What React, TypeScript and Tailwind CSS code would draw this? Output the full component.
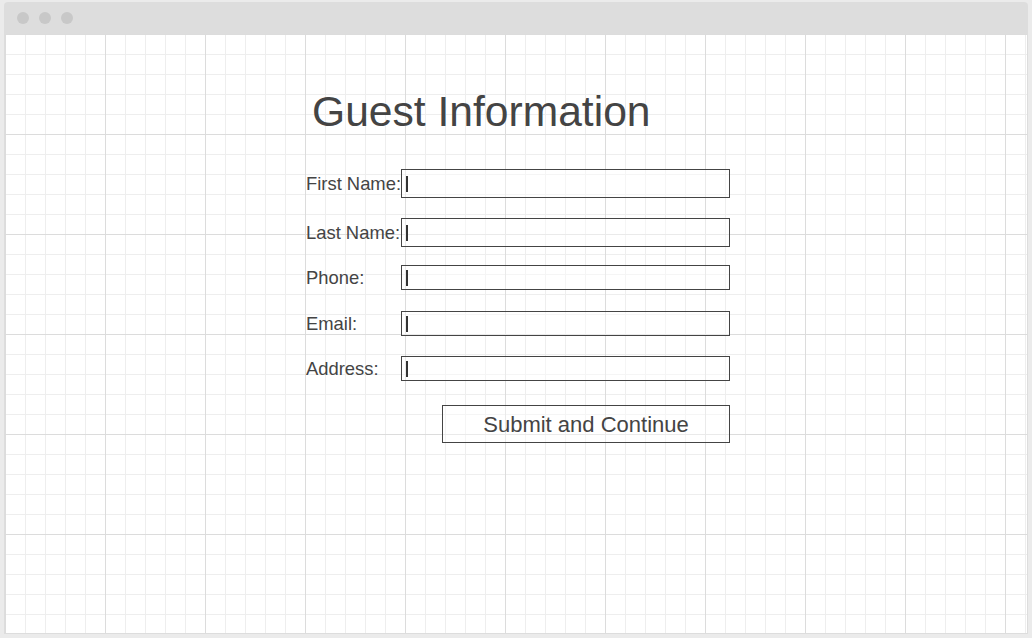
import React from 'react';

const fields = [
    { label: 'First Name:', h: 'h-[29px]', mt: 'mt-0' },
    { label: 'Last Name:', h: 'h-[29px]', mt: 'mt-[20px]' },
    { label: 'Phone:', h: 'h-[25px]', mt: 'mt-[18px]' },
    { label: 'Email:', h: 'h-[25px]', mt: 'mt-[21px]' },
    { label: 'Address:', h: 'h-[25px]', mt: 'mt-[20px]' },
];

function Field({ label, h, mt }: { label: string; h: string; mt: string }) {
    return (
        <div className={`flex items-center ${mt}`}>
            <label className="w-[95px] pt-[1px] text-[18.4px] leading-none text-[#444444] whitespace-nowrap">{label}</label>
            <div className={`w-[329px] ${h} border border-[#444444] bg-white/40 flex items-center pl-[4px]`}>
                <span className="block w-[2px] h-[16px] bg-[#333333]" />
            </div>
        </div>
    );
}

export default function App() {
    return (
        <div className="w-[1032px] h-[638px] bg-[#ebebeb] pt-[2px] pl-[4px] font-['Liberation_Sans',Arial,sans-serif]">
            <div className="w-[1024px] h-[632px] bg-[#dddddd] rounded-t-[4px] px-[1px] pb-[1px] flex flex-col">
                {/* Title bar */}
                <div className="h-[32px] flex items-center gap-[10px] pl-[12px]">
                    <span className="w-[12px] h-[12px] rounded-full bg-[#c8c8c8]" />
                    <span className="w-[12px] h-[12px] rounded-full bg-[#c8c8c8]" />
                    <span className="w-[12px] h-[12px] rounded-full bg-[#c8c8c8]" />
                </div>

                {/* Canvas */}
                <div className="flex-1 bg-white bg-[linear-gradient(to_right,#dcdcdc_1px,transparent_1px),linear-gradient(to_bottom,#dcdcdc_1px,transparent_1px),linear-gradient(to_right,#eeeeee_1px,transparent_1px),linear-gradient(to_bottom,#eeeeee_1px,transparent_1px)] bg-[size:100px_100px,100px_100px,20px_20px,20px_20px]">
                    <div className="pl-[301px] pt-[53px]">
                        <h1 className="ml-[6px] text-[42.6px] leading-[48px] text-[#444444] font-normal">Guest Information</h1>
                        <form className="mt-[34px] flex flex-col">
                            {fields.map((f) => (
                                <Field key={f.label} {...f} />
                            ))}
                            <div className="mt-[24px] pl-[136px]">
                                <button
                                    type="button"
                                    className="w-[288px] h-[38px] pt-[2px] border border-[#444444] bg-white/40 text-[22px] leading-none text-[#444444]"
                                >
                                    Submit and Continue
                                </button>
                            </div>
                        </form>
                    </div>
                </div>
            </div>
        </div>
    );
}
